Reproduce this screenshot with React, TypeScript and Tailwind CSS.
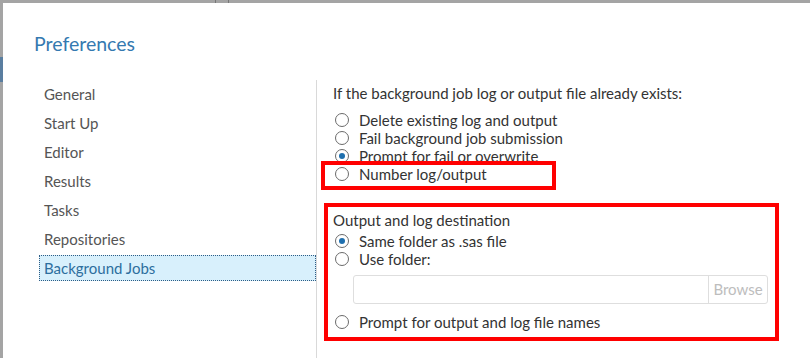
import React from 'react'

const navItems = ['General', 'Start Up', 'Editor', 'Results', 'Tasks', 'Repositories', 'Background Jobs']

function Radio({ checked, label }: { checked?: boolean; label: string }) {
  return (
    <div className="flex items-center h-[18px] ml-[2px]">
      <span className="w-[14px] h-[14px] rounded-full border border-[#6b6b6b] bg-white flex items-center justify-center shrink-0">
        {checked && <span className="w-[6px] h-[6px] rounded-full bg-[#1e6fae]" />}
      </span>
      <span className="ml-[10px] text-[15px] leading-[18px] text-[#333]">{label}</span>
    </div>
  )
}

export default function App() {
  return (
    <div
      className="relative w-[810px] h-[358px] overflow-hidden bg-[#a4a4a4] pt-[3px] pl-[3px]"
      style={{ fontFamily: 'Lato, "Open Sans", sans-serif' }}
    >
      {/* window chrome bits */}
      <div className="absolute top-0 left-[215px] w-px h-[3px] bg-[#777]" />
      <div className="absolute top-0 left-[228px] w-px h-[3px] bg-[#777]" />
      <div className="absolute top-[57px] left-0 w-[3px] h-[25px] bg-[#5a7ea0]" />

      <div className="h-full bg-white flex flex-col">
        <h1 className="pl-[31px] pt-[29px] text-[19.5px] leading-[24px] text-[#3479b0] font-normal">Preferences</h1>

        <div className="flex flex-1 mt-[24px]">
          {/* left nav */}
          <nav className="w-[277px] ml-[36px] pt-[1px] flex flex-col gap-[3px]">
            {navItems.map((item) => {
              const selected = item === 'Background Jobs'
              return (
                <div
                  key={item}
                  className={`h-[26px] flex items-center pl-[4px] text-[15px] border ${
                    selected
                      ? 'bg-[#d8f0fc] border-dotted border-[#2d5d86] text-[#2d6e9e]'
                      : 'border-transparent text-[#555]'
                  }`}
                >
                  {item}
                </div>
              )
            })}
          </nav>

          <div className="w-px bg-[#d9d9d9]" />

          {/* content */}
          <main className="flex-1 pl-[16px] pt-[4px]">
            <p className="text-[15px] leading-[18px] text-[#333]">
              If the background job log or output file already exists:
            </p>
            <div className="mt-[9px]">
              <Radio label="Delete existing log and output" />
              <Radio label="Fail background job submission" />
              <Radio checked label="Prompt for fail or overwrite" />
              <div className="relative">
                <Radio label="Number log/output" />
                <div className="absolute left-[-12px] top-[-4px] w-[235px] h-[29px] border-4 border-[#ff0000]" />
              </div>
            </div>

            <div className="mt-[20px] -ml-[9px] w-[455px] border-4 border-[#ff0000] pl-[5px] pt-[4px] pb-[6px]">
              <p className="text-[15px] leading-[18px] text-[#333]">Output and log destination</p>
              <div className="mt-[3px]">
                <Radio checked label="Same folder as .sas file" />
                <Radio label="Use folder:" />
              </div>
              <div className="mt-[7px] ml-[20px] w-[415px] h-[29px] flex border border-[#dedede] rounded-[3px]">
                <div className="flex-1" />
                <div className="w-[59px] border-l border-[#dedede] flex items-center justify-center text-[15px] text-[#bdbdbd]">
                  Browse
                </div>
              </div>
              <div className="mt-[9px]">
                <Radio label="Prompt for output and log file names" />
              </div>
            </div>
          </main>
        </div>
      </div>
    </div>
  )
}
